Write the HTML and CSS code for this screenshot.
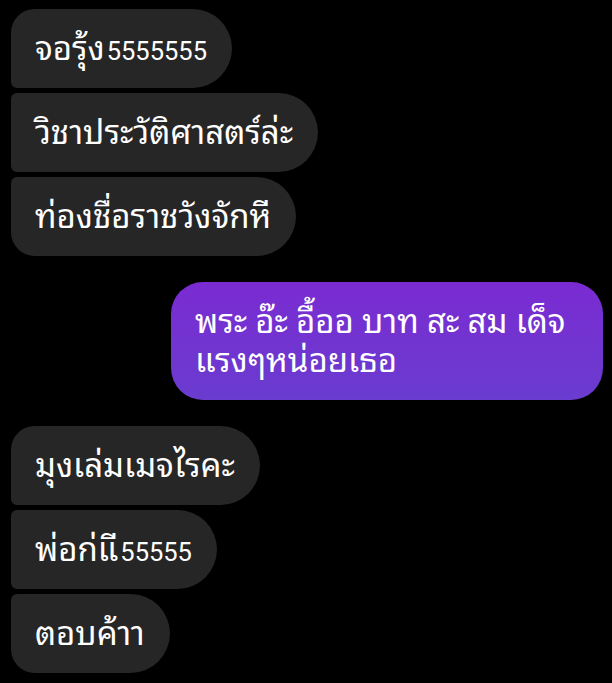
FILE: index.html
```html
<!DOCTYPE html>
<html lang="th">
<head>
    <meta charset="UTF-8">
    <meta name="viewport" content="width=device-width, initial-scale=1.0">
    <title>Chat</title>
    <link rel="stylesheet" href="styles.css">
</head>
<body>
    <div class="chat">
        <!-- Incoming group -->
        <div class="group incoming">
            <div class="bubble">จอรุ้ง<span class="num">5555555</span></div>
            <div class="bubble">วิชาประวัติศาสตร์ล่ะ</div>
            <div class="bubble">ท่องชื่อราชวังจักหี</div>
        </div>

        <!-- Outgoing -->
        <div class="group outgoing">
            <div class="bubble">พระ อ๊ะ อื้ออ บาท สะ สม เด็จ<br>แรงๆหน่อยเธอ</div>
        </div>

        <!-- Incoming group -->
        <div class="group incoming">
            <div class="bubble">มุงเล่มเมจไรคะ</div>
            <div class="bubble">พ่อก่แี<span class="num">55555</span></div>
            <div class="bubble">ตอบค้าา</div>
        </div>
    </div>
</body>
</html>
```

FILE: styles.css
```css
* {
    box-sizing: border-box;
    margin: 0;
    padding: 0;
}

body {
    background: #000;
    font-family: Roboto, "Noto Sans Thai Looped", "Noto Looped Thai UI", Loma, Garuda, Kinnari, Umpush, Waree, "Noto Sans Thai", sans-serif;
    color: #fff;
}

.chat {
    display: flex;
    flex-direction: column;
    gap: 26px;
    padding: 9px 9px 0 11px;
}

.group {
    display: flex;
    flex-direction: column;
    gap: 5px;
}

.incoming {
    align-items: flex-start;
}

.outgoing {
    align-items: flex-end;
}

.bubble {
    font-size: 33px;
    line-height: 39px;
    padding: 20px 25px 20px 24px;
    white-space: nowrap;
}

/* the digits are set smaller than the thai glyphs */
.num {
    font-size: 25.5px;
    line-height: 1;
    margin-left: 2px;
}

.incoming .bubble {
    background: #262626;
    border-radius: 6px 40px 40px 6px;
}

.incoming .bubble:first-child {
    border-top-left-radius: 24px;
}

.incoming .bubble:last-child {
    border-bottom-left-radius: 24px;
}

.outgoing .bubble {
    background: linear-gradient(180deg, #7a2bd2, #6a3ccf);
    border-radius: 32px;
    width: 432px;
}
```
